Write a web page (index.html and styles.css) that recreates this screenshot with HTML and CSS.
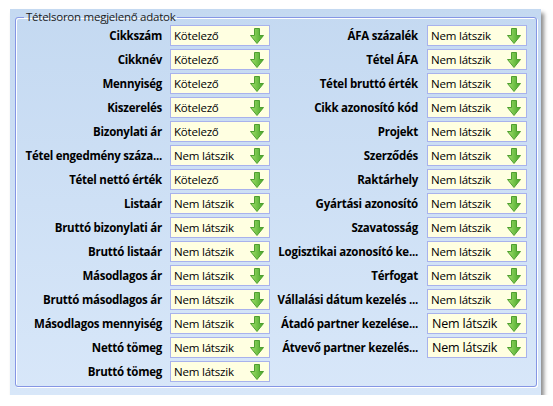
FILE: index.html
```html
<!DOCTYPE html>
<html lang="hu">
<head>
    <meta charset="UTF-8">
    <title>Tételsoron megjelenő adatok</title>
    <link rel="stylesheet" href="styles.css">
</head>
<body>
    <div class="panel">
        <fieldset class="group">
            <legend>Tételsoron megjelenő adatok</legend>
            <div class="columns">
                <div class="column column-left" id="left"></div>
                <div class="column column-right" id="right"></div>
            </div>
        </fieldset>
    </div>

    <script>
        var leftFields = [
            ['Cikkszám', 'Kötelező'],
            ['Cikknév', 'Kötelező'],
            ['Mennyiség', 'Kötelező'],
            ['Kiszerelés', 'Kötelező'],
            ['Bizonylati ár', 'Kötelező'],
            ['Tétel engedmény száza...', 'Nem látszik'],
            ['Tétel nettó érték', 'Kötelező'],
            ['Listaár', 'Nem látszik'],
            ['Bruttó bizonylati ár', 'Nem látszik'],
            ['Bruttó listaár', 'Nem látszik'],
            ['Másodlagos ár', 'Nem látszik'],
            ['Bruttó másodlagos ár', 'Nem látszik'],
            ['Másodlagos mennyiség', 'Nem látszik'],
            ['Nettó tömeg', 'Nem látszik'],
            ['Bruttó tömeg', 'Nem látszik']
        ];
        var rightFields = [
            ['ÁFA százalék', 'Nem látszik'],
            ['Tétel ÁFA', 'Nem látszik'],
            ['Tétel bruttó érték', 'Nem látszik'],
            ['Cikk azonosító kód', 'Nem látszik'],
            ['Projekt', 'Nem látszik'],
            ['Szerződés', 'Nem látszik'],
            ['Raktárhely', 'Nem látszik'],
            ['Gyártási azonosító', 'Nem látszik'],
            ['Szavatosság', 'Nem látszik'],
            ['Logisztikai azonosító ke...', 'Nem látszik'],
            ['Térfogat', 'Nem látszik'],
            ['Vállalási dátum kezelés ...', 'Nem látszik'],
            ['Átadó partner kezelése...', 'Nem látszik', true],
            ['Átvevő partner kezelés...', 'Nem látszik', true]
        ];

        var arrow = '<svg class="arrow" width="14" height="16" viewBox="0 0 14 16">' +
            '<defs><linearGradient id="g" x1="0" y1="0" x2="1" y2="0">' +
            '<stop offset="0" stop-color="#a2e06a"/><stop offset="1" stop-color="#45a528"/>' +
            '</linearGradient></defs>' +
            '<path d="M4.5 0.5 H9.5 V7.5 H13.5 L7 15.5 L0.5 7.5 H4.5 Z" fill="url(#g)" stroke="#4f9f30" stroke-width="1"/>' +
            '</svg>';

        function fill(id, fields) {
            var html = '';
            for (var i = 0; i < fields.length; i++) {
                var big = fields[i][2] ? ' combo-large' : '';
                html += '<div class="row"><span class="label"><span>' + fields[i][0] + '</span></span>' +
                    '<div class="combo' + big + '"><span class="value">' + fields[i][1] + '</span>' + arrow + '</div></div>';
            }
            document.getElementById(id).innerHTML = html;
        }
        fill('left', leftFields);
        fill('right', rightFields);
    </script>
</body>
</html>
```

FILE: styles.css
```css
body {
    margin: 0;
    background-color: #ffffff;
    font-family: 'Open Sans', 'Noto Sans', sans-serif;
    font-size: 12px;
    color: #000;
}
.panel {
    width: 531px;
    height: 386px;
    margin: 9px 0 0 10px;
    box-sizing: border-box;
    padding: 0 4px 0 5px;
    background: linear-gradient(to bottom, #c4d9f1, #d8e7f9);
    box-shadow: 3px 4px 4px rgba(0, 0, 0, 0.45);
}
.group {
    margin: 0;
    padding: 0 9px 0 0;
    height: 378px;
    box-sizing: border-box;
    border: 1px solid #8596e4;
    border-radius: 3px;
    box-shadow: 1px 1px 0 #ffffff, inset 1px 1px 0 #ffffff;
}
.group legend {
    margin-left: 8px;
    padding: 0 2px;
    font-size: 11.5px;
    letter-spacing: -0.25px;
    line-height: 16px;
    color: #1a1a1a;
}
.columns {
    display: flex;
    gap: 8px;
}
.column {
    display: flex;
    flex-direction: column;
    gap: 3px;
}
.row {
    display: flex;
    align-items: center;
    height: 21px;
}
.label {
    display: flex;
    justify-content: flex-end;
    font-weight: bold;
    white-space: nowrap;
    font-size: 11.5px;
    letter-spacing: -0.25px;
}
.column-left .label {
    width: 146px;
    margin-right: 8px;
}
.column-right .label {
    width: 140px;
    margin-right: 9px;
}
.combo {
    width: 100px;
    height: 21px;
    box-sizing: border-box;
    border: 1px solid #a8b2ec;
    background-color: #ffffe1;
    display: flex;
    align-items: center;
    justify-content: space-between;
    padding: 0 5px 0 3px;
}
.value {
    font-size: 11.5px;
    letter-spacing: -0.2px;
    white-space: nowrap;
}
.combo-large .value {
    font-size: 12.5px;
    padding-left: 1px;
}
.arrow {
    display: block;
}
```
